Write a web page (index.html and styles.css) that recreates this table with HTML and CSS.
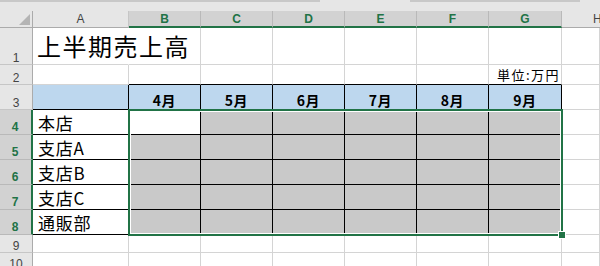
FILE: index.html
```html
<!DOCTYPE html>
<html lang="ja">
<head>
<meta charset="utf-8">
<title>上半期売上高</title>
<link rel="stylesheet" href="styles.css">
</head>
<body>
<div class="top"><div class="seg seg1"></div><div class="seg seg2"></div></div>
<div class="sheet">
  <div class="cell corner"><svg width="11" height="11" viewBox="0 0 11 11"><polygon points="0,11 11,11 11,0" fill="#b4b4b4"/></svg></div>
  <div class="cell ch">A</div>
  <div class="cell ch sel">B</div>
  <div class="cell ch sel">C</div>
  <div class="cell ch sel">D</div>
  <div class="cell ch sel">E</div>
  <div class="cell ch sel">F</div>
  <div class="cell ch sel">G</div>
  <div class="cell ch last">H</div>

  <div class="cell rh">1</div>
  <div class="cell title"><span>上半期売上高</span></div>
  <div class="cell"></div><div class="cell"></div><div class="cell"></div><div class="cell"></div><div class="cell"></div><div class="cell"></div><div class="cell"></div>

  <div class="cell rh">2</div>
  <div class="cell"></div>
  <div class="cell bb"></div><div class="cell bb"></div><div class="cell bb"></div><div class="cell bb"></div><div class="cell bb"></div>
  <div class="cell bb unit"><span>単位:万円</span></div>
  <div class="cell"></div>

  <div class="cell rh">3</div>
  <div class="cell blue br bb"></div>
  <div class="cell blue br bb month"><span>4月</span></div>
  <div class="cell blue br bb month"><span>5月</span></div>
  <div class="cell blue br bb month"><span>6月</span></div>
  <div class="cell blue br bb month"><span>7月</span></div>
  <div class="cell blue br bb month"><span>8月</span></div>
  <div class="cell blue br bb month"><span>9月</span></div>
  <div class="cell"></div>

  <div class="cell rh sel">4</div>
  <div class="cell br bb label"><span>本店</span></div>
  <div class="cell br bb"></div>
  <div class="cell gray br bb"></div><div class="cell gray br bb"></div><div class="cell gray br bb"></div><div class="cell gray br bb"></div><div class="cell gray br bb"></div>
  <div class="cell"></div>

  <div class="cell rh sel">5</div>
  <div class="cell br bb label"><span>支店A</span></div>
  <div class="cell gray br bb"></div><div class="cell gray br bb"></div><div class="cell gray br bb"></div><div class="cell gray br bb"></div><div class="cell gray br bb"></div><div class="cell gray br bb"></div>
  <div class="cell"></div>

  <div class="cell rh sel">6</div>
  <div class="cell br bb label"><span>支店B</span></div>
  <div class="cell gray br bb"></div><div class="cell gray br bb"></div><div class="cell gray br bb"></div><div class="cell gray br bb"></div><div class="cell gray br bb"></div><div class="cell gray br bb"></div>
  <div class="cell"></div>

  <div class="cell rh sel">7</div>
  <div class="cell br bb label"><span>支店C</span></div>
  <div class="cell gray br bb"></div><div class="cell gray br bb"></div><div class="cell gray br bb"></div><div class="cell gray br bb"></div><div class="cell gray br bb"></div><div class="cell gray br bb"></div>
  <div class="cell"></div>

  <div class="cell rh sel">8</div>
  <div class="cell br bb label"><span>通販部</span></div>
  <div class="cell gray br bb"></div><div class="cell gray br bb"></div><div class="cell gray br bb"></div><div class="cell gray br bb"></div><div class="cell gray br bb"></div><div class="cell gray br bb"></div>
  <div class="cell"></div>

  <div class="cell rh">9</div>
  <div class="cell"></div><div class="cell"></div><div class="cell"></div><div class="cell"></div><div class="cell"></div><div class="cell"></div><div class="cell"></div><div class="cell"></div>

  <div class="cell rh">10</div>
  <div class="cell"></div><div class="cell"></div><div class="cell"></div><div class="cell"></div><div class="cell"></div><div class="cell"></div><div class="cell"></div><div class="cell"></div>

  <div class="selection"></div>
  <div class="handle"></div>
</div>
</body>
</html>
```

FILE: styles.css
```css
* { box-sizing: border-box; }
html, body { margin: 0; padding: 0; }
body {
  width: 600px;
  height: 266px;
  overflow: hidden;
  background: #fff;
  font-family: "Noto Sans CJK JP", sans-serif;
  color: #000;
}
.top {
  height: 11px;
  background: #e6e6e6;
  display: flex;
  gap: 90px;
}
.seg { height: 2px; background: #c8c8c8; }
.seg1 { width: 320px; }
.seg2 { width: 170px; }

.sheet {
  position: relative;
  display: grid;
  grid-template-columns: 33px 96px repeat(5, 72px) 73px 38px;
  grid-template-rows: 17px 37px 20px 25px repeat(5, 25px) 18px 18px;
  width: 600px;
  overflow: hidden;
}
.cell {
  border-right: 1px solid #d4d4d4;
  border-bottom: 1px solid #d4d4d4;
  display: flex;
  align-items: flex-end;
  white-space: nowrap;
  min-width: 0;
  padding: 0 3px 3px;
}
.cell span { line-height: 1; display: block; }

.corner {
  background: #e6e6e6;
  border-right: 1px solid #ababab;
  border-bottom: 1px solid #ababab;
  justify-content: flex-end;
  padding: 0 2px 2px 0;
}
.corner svg { display: block; }

.ch {
  background: #e6e6e6;
  border-right: 1px solid #c6c6c6;
  border-bottom: 1px solid #ababab;
  justify-content: center;
  align-items: center;
  padding: 0;
  font: 12px "Liberation Sans", sans-serif;
  color: #444;
}
.ch.last {
  justify-content: flex-start;
  padding-left: 31px;
  border-right: none;
}
.ch.sel {
  background: #d2d2d2;
  color: #217346;
  font-weight: bold;
  border-bottom: 2px solid #217346;
  border-right-color: #b9b9b9;
  padding-top: 1px;
}
.rh {
  background: #e6e6e6;
  border-right: 1px solid #ababab;
  border-bottom: 1px solid #c6c6c6;
  justify-content: center;
  padding: 0;
  font: 12px/1 "Liberation Sans", sans-serif;
  color: #444;
}
.rh.sel {
  background: #d2d2d2;
  color: #217346;
  font-weight: bold;
  border-right: 2px solid #217346;
  border-bottom-color: #b9b9b9;
  padding: 0 1px 1px 0;
}

.title {
  border-right-color: transparent;
  overflow: visible;
  font-size: 24px;
  letter-spacing: 1.5px;
  padding: 0 0 6px 4px;
}
.unit {
  justify-content: flex-end;
  font-size: 13px;
  letter-spacing: 1.5px;
  padding: 0 1px 3px 0;
}
.month {
  justify-content: center;
  font-size: 14px;
  font-weight: bold;
  letter-spacing: 0.5px;
  padding: 0 0 2px;
}
.label {
  font-size: 17px;
  letter-spacing: 0.8px;
  padding: 0 0 3px 5px;
}

.blue { background: #bdd7ee; }
.gray { background: #c9c9c9; }
.br { border-right-color: #000; }
.bb { border-bottom-color: #000; }

.selection {
  position: absolute;
  left: 128px;
  top: 98px;
  width: 435px;
  height: 127px;
  border: 2px solid #217346;
  box-shadow: inset 0 0 0 1px #fff;
  pointer-events: none;
}
.handle {
  position: absolute;
  left: 558px;
  top: 220px;
  width: 8px;
  height: 8px;
  background: #217346;
  border: 1px solid #fff;
}
```
